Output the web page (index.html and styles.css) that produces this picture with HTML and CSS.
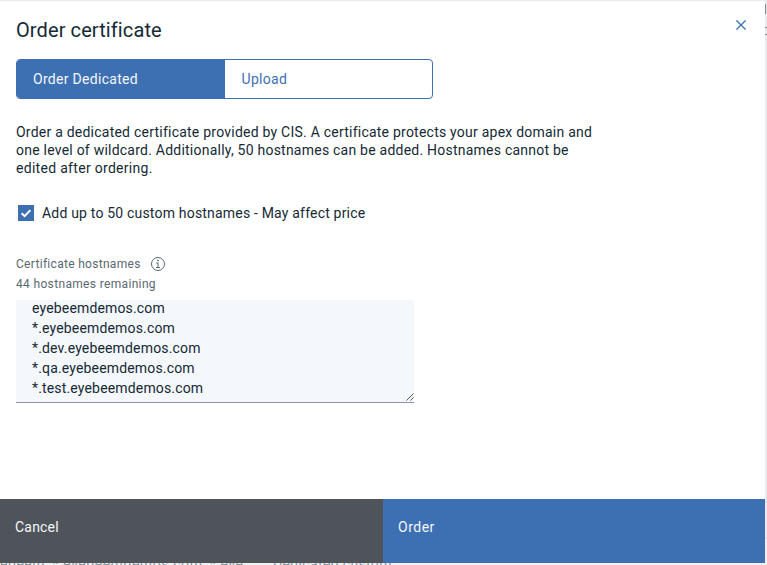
FILE: index.html
```
<!DOCTYPE html>
<html lang="en">
<head>
<meta charset="utf-8">
<title>Order certificate</title>
<link rel="stylesheet" href="styles.css">
</head>
<body>
<div class="backdrop">
  <div class="backdrop-row"><span class="cell-hosts">ebeem, *.eyebeemdemos.com, *.eye…</span><span class="cell-type">Dedicated custom</span></div>
</div>
<svg class="backdrop-edge" width="2" height="40" viewBox="0 0 2 40"><path fill="#7d8990" d="M0 4h1v10H0zM0 27h2v1H0zM0 34h2v1H0z"/></svg>
<section class="modal">
  <div class="content">
    <header class="header">
      <h1 class="title"><span>Order certificate</span></h1>
      <button class="close" aria-label="Close"><svg width="10" height="10" viewBox="0 0 10 10"><path d="M.4.4l9.2 9.2M9.6.4L.4 9.6" fill="none" stroke="#3d70b2" stroke-width="1.3"/></svg></button>
    </header>
    <nav class="switcher">
      <button class="tab tab-active"><span class="t-dedicated">Order Dedicated</span></button>
      <button class="tab"><span class="t-upload">Upload</span></button>
    </nav>
    <p class="intro"><span class="l1">Order a dedicated certificate provided by CIS. A certificate protects your apex domain and</span><br><span class="l2">one level of wildcard. Additionally, 50 hostnames can be added. Hostnames cannot be</span><br><span class="l3">edited after ordering.</span></p>
    <div class="check-row">
      <svg width="16" height="16" viewBox="0 0 16 16"><path fill="#3d70b2" d="M0 0h16v16H0z"/><path d="M3.6 8.2l3 2.9 5.8-6" fill="none" stroke="#fff" stroke-width="2"/></svg>
      <span class="t-check">Add up to 50 custom hostnames - May affect price</span>
    </div>
    <div class="label-row">
      <span class="t-label">Certificate hostnames</span>
      <svg width="16" height="16" viewBox="0 0 16 16"><circle cx="8" cy="8" r="6.5" fill="none" stroke="#5a6872"/><path d="M7.2 3.7h1.6v1.6H7.2zM6.2 6.5h2.3v4.6h1.4v1H6v-1h1.5V7.5H6.2z" fill="#5a6872"/></svg>
    </div>
    <div class="helper"><span class="t-helper">44 hostnames remaining</span></div>
    <div class="hosts">
      <div><span class="h1">eyebeemdemos.com</span></div>
      <div><span class="h2">*.eyebeemdemos.com</span></div>
      <div><span class="h3">*.dev.eyebeemdemos.com</span></div>
      <div><span class="h4">*.qa.eyebeemdemos.com</span></div>
      <div><span class="h5">*.test.eyebeemdemos.com</span></div>
      <svg class="grip" width="8" height="8" viewBox="0 0 8 8"><path d="M.5 7.5l7-7M4.5 7.5l3-3" fill="none" stroke="#555" stroke-width="1"/></svg>
    </div>
  </div>
  <footer class="actions">
    <button class="cancel"><span class="t-cancel">Cancel</span></button>
    <button class="order"><span class="t-order">Order</span></button>
  </footer>
</section>
</body>
</html>
```
FILE: styles.css
```
* { box-sizing: border-box; }
body { margin: 0; width: 767px; height: 565px; overflow: hidden; position: relative; background: #e6ebf0; color: #152935; font: 400 14px/18px Roboto, "Open Sans", sans-serif; }
span { white-space: nowrap; }
button { border: 0; padding: 0; margin: 0; font: inherit; text-align: left; background: none; }
svg { display: block; flex: none; }
.backdrop { position: absolute; left: 0; right: 0; top: 538px; height: 27px; background: #f0f2f2; overflow: hidden; border-top: 1px solid #dfe3e6; color: #8d9599; }
.backdrop-row { display: flex; padding-top: 16px; }
.cell-hosts { width: 273px; letter-spacing: .55px; }
.cell-type { letter-spacing: .35px; }
.backdrop-edge { position: absolute; right: 0; top: 0; }
.modal { position: relative; margin-top: 1px; width: 765px; height: 562px; background: #fff; display: flex; flex-direction: column; }
.content { flex: 1; padding: 0 16px; }
.header { display: flex; justify-content: space-between; height: 58px; }
.title { margin: 17px 0 0; font-size: 20px; line-height: 25px; font-weight: 400; letter-spacing: .1px; }
.close { height: 10px; margin: 19px 3px 0 0; }
.switcher { display: flex; width: 417px; height: 40px; border: 1px solid #3d70b2; border-radius: 4px; overflow: hidden; }
.tab { width: 208px; padding-left: 16px; color: #3d70b2; }
.tab + .tab { padding-left: 17px; }
.tab-active { background: #3d70b2; color: #f4f7fb; }
.intro { margin: 24px 0 0; height: 54px; }
.check-row { display: flex; align-items: center; gap: 8px; margin: 28px 0 0 2px; height: 16px; }
.label-row { display: flex; align-items: center; gap: 9px; margin-top: 34px; height: 18px; color: #5a6872; font-size: 12px; }
.helper { color: #5a6872; font-size: 12px; line-height: 20px; margin-top: 1px; height: 20px; }
.hosts { position: relative; width: 398px; height: 103px; margin-top: 6px; padding: 0 16px; background: #f4f7fb; border-bottom: 1px solid #8897a2; line-height: 20px; overflow: hidden; }
.hosts div:first-child { margin-top: -2px; }
.grip { position: absolute; right: 0; bottom: 1px; }
.actions { display: flex; height: 64px; color: #fff; }
.cancel, .order { padding: 0 0 8px 15px; color: #f4f7fb; }
.cancel { width: 383px; background: #4f545a; }
.order { width: 382px; background: #3d70b2; }
.t-dedicated, .t-upload, .l3 { letter-spacing: .3px; }
.l1, .l2 { letter-spacing: .23px; }
.t-check { letter-spacing: .19px; }
.h1, .h2, .h3, .h4, .h5 { letter-spacing: .16px; }
.t-cancel { letter-spacing: .2px; }
.t-order { letter-spacing: .5px; }
.t-label { letter-spacing: .3px; }
.t-helper { letter-spacing: .34px; }
```
